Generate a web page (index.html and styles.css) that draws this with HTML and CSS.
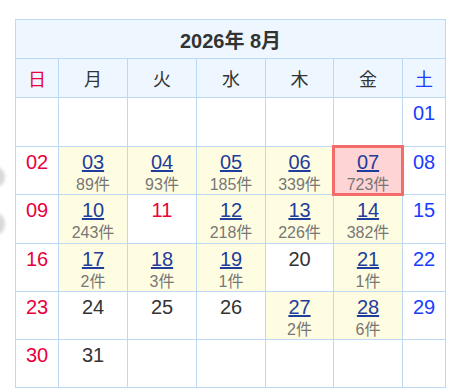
FILE: index.html
```html
<!DOCTYPE html>
<html lang="ja">
<head>
<meta charset="utf-8">
<title>2026年 8月</title>
<link rel="stylesheet" href="styles.css">
</head>
<body>
<div class="blob blob-a"></div>
<div class="blob blob-b"></div>
<div class="cal">
  <div class="title">2026年 8月</div>
  <div class="wd sun">日</div>
  <div class="wd">月</div>
  <div class="wd">火</div>
  <div class="wd">水</div>
  <div class="wd">木</div>
  <div class="wd">金</div>
  <div class="wd sat">土</div>

  <div class="day"></div>
  <div class="day"></div>
  <div class="day"></div>
  <div class="day"></div>
  <div class="day"></div>
  <div class="day"></div>
  <div class="day"><span class="num sat">01</span></div>

  <div class="day"><span class="num sun">02</span></div>
  <div class="day has"><a class="num link">03</a><span class="cnt">89件</span></div>
  <div class="day has"><a class="num link">04</a><span class="cnt">93件</span></div>
  <div class="day has"><a class="num link">05</a><span class="cnt">185件</span></div>
  <div class="day has"><a class="num link">06</a><span class="cnt">339件</span></div>
  <div class="day sel"><a class="num link">07</a><span class="cnt">723件</span></div>
  <div class="day"><span class="num sat">08</span></div>

  <div class="day"><span class="num sun">09</span></div>
  <div class="day has"><a class="num link">10</a><span class="cnt">243件</span></div>
  <div class="day"><span class="num sun">11</span></div>
  <div class="day has"><a class="num link">12</a><span class="cnt">218件</span></div>
  <div class="day has"><a class="num link">13</a><span class="cnt">226件</span></div>
  <div class="day has"><a class="num link">14</a><span class="cnt">382件</span></div>
  <div class="day"><span class="num sat">15</span></div>

  <div class="day"><span class="num sun">16</span></div>
  <div class="day has"><a class="num link">17</a><span class="cnt">2件</span></div>
  <div class="day has"><a class="num link">18</a><span class="cnt">3件</span></div>
  <div class="day has"><a class="num link">19</a><span class="cnt">1件</span></div>
  <div class="day"><span class="num">20</span></div>
  <div class="day has"><a class="num link">21</a><span class="cnt">1件</span></div>
  <div class="day"><span class="num sat">22</span></div>

  <div class="day"><span class="num sun">23</span></div>
  <div class="day"><span class="num">24</span></div>
  <div class="day"><span class="num">25</span></div>
  <div class="day"><span class="num">26</span></div>
  <div class="day has"><a class="num link">27</a><span class="cnt">2件</span></div>
  <div class="day has"><a class="num link">28</a><span class="cnt">6件</span></div>
  <div class="day"><span class="num sat">29</span></div>

  <div class="day"><span class="num sun">30</span></div>
  <div class="day"><span class="num">31</span></div>
  <div class="day"></div>
  <div class="day"></div>
  <div class="day"></div>
  <div class="day"></div>
  <div class="day"></div>
</div>
</body>
</html>
```
FILE: styles.css
```css
html, body {
  margin: 0;
  padding: 0;
  background: #ffffff;
}
body {
  font-family: "Liberation Sans", Arial, "Noto Sans CJK JP", sans-serif;
  color: #333333;
  position: relative;
  width: 466px;
  height: 388px;
  overflow: hidden;
}
.blob {
  position: absolute;
  left: -12px;
  width: 17px;
  height: 20px;
  border-radius: 50%;
  background: #d9d9d9;
  filter: blur(1.5px);
}
.blob-a { top: 167px; }
.blob-b { top: 213px; height: 22px; }

.cal {
  margin: 19px 0 0 15px;
  width: 431px;
  display: grid;
  grid-template-columns: 42px 68px 68px 68px 67px 68px 42px;
  grid-template-rows: 38px 38px 48px 47px 48px 47px 47px 47px;
  gap: 1px;
  padding: 1px;
  box-sizing: border-box;
  background: #bdd8f3;
}
.title {
  grid-column: 1 / -1;
  background: #eef7ff;
  display: flex;
  align-items: center;
  justify-content: center;
  font-weight: bold;
  font-size: 20px;
  color: #333333;
}
.wd {
  background: #eef7ff;
  display: flex;
  align-items: center;
  justify-content: center;
  font-size: 18px;
  color: #333333;
  font-family: "Noto Sans CJK JP", sans-serif;
}
.wd.sun { color: #e8003d; }
.wd.sat { color: #1a3cff; }

.day {
  background: #ffffff;
  display: flex;
  flex-direction: column;
  align-items: center;
  padding-top: 4px;
  box-sizing: border-box;
}
.day.has { background: #fffde1; }
.day.sel {
  background: #ffd4d4;
  outline: 3px solid #f26c6c;
  outline-offset: -1px;
  position: relative;
  z-index: 1;
}
.num {
  font-size: 20px;
  line-height: 22px;
  color: #333333;
}
.num.sun { color: #e8003d; }
.num.sat { color: #1a3cff; }
.num.link {
  color: #1f3d9c;
  text-decoration: underline;
}
.cnt {
  margin-top: 3px;
  font-size: 16px;
  line-height: 18px;
  color: #777777;
}
```
